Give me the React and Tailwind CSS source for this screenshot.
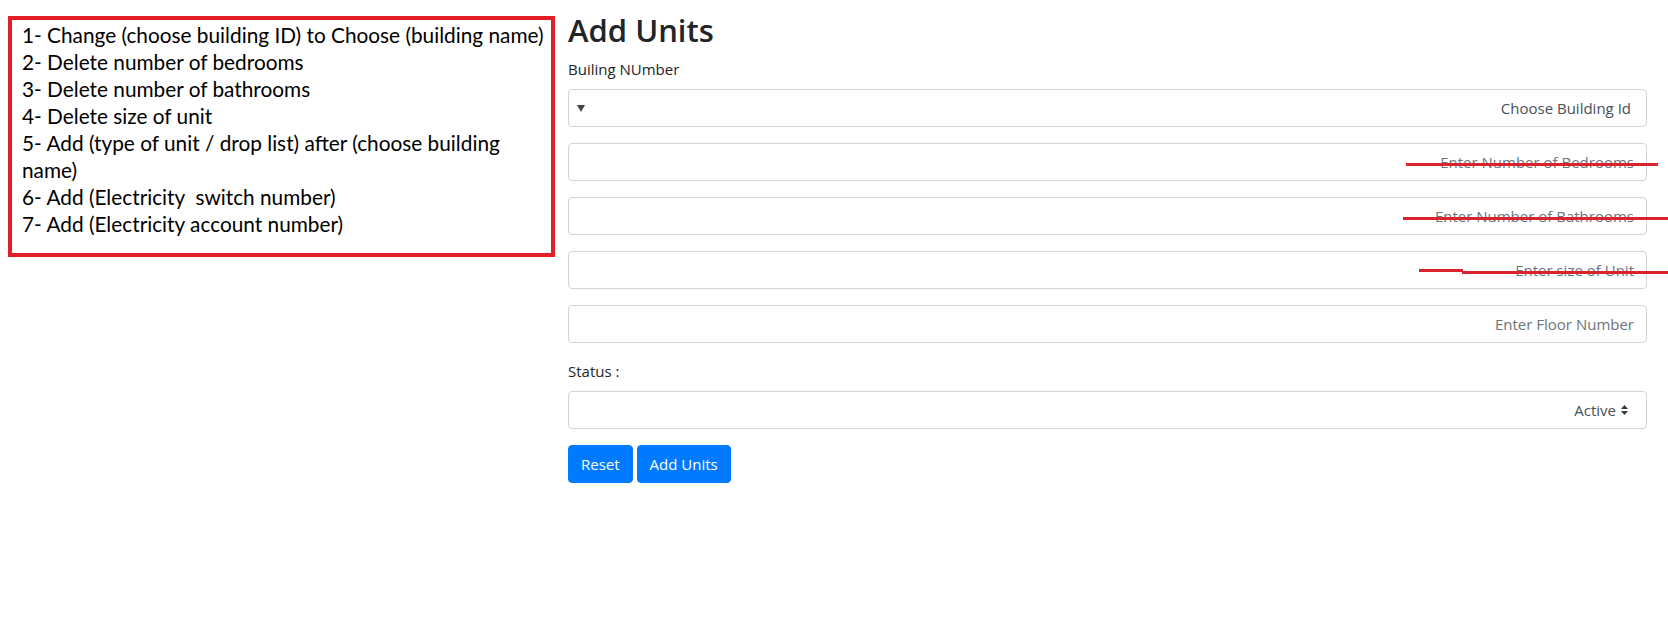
import React from 'react'

const notes = [
    '1- Change (choose building ID) to Choose (building name)',
    '2- Delete number of bedrooms',
    '3- Delete number of bathrooms',
    '4- Delete size of unit',
    '5- Add (type of unit / drop list) after (choose building',
    'name)',
    '6- Add (Electricity  switch number)',
    '7- Add (Electricity account number)',
]

const inputClass =
    'block h-[38px] w-full rounded-[4px] border border-[#ced4da] bg-white px-3 text-right text-[15px] text-[#495057] outline-none placeholder:text-[#6c757d]'

const App = () => {
    return (
        <main
            className="relative flex min-h-[627px] w-[1668px] bg-white text-[#212529]"
            style={{ fontFamily: '"Open Sans", "Noto Sans", sans-serif' }}
        >
            <div className="pl-[8px] pt-[16px]">
                <div
                    className="h-[241px] w-[547px] border-4 border-[#e21f26] pl-[10px] pt-[1px] text-[20.8px] leading-[27px] text-black"
                    style={{ fontFamily: 'Lato, "Liberation Sans", sans-serif' }}
                >
                    {notes.map((line, i) => (
                        <p key={i} className="whitespace-pre">
                            {line}
                        </p>
                    ))}
                </div>
            </div>

            <form className="ml-[13px] w-[1079px] pt-[11px]">
                <h2 className="mb-2 text-[31px] font-semibold leading-[38px]">Add Units</h2>

                <div className="mb-4">
                    <label className="mb-2 block text-[15px] leading-6">Builing NUmber</label>
                    <div className="flex h-[38px] w-full items-center justify-between rounded-[4px] border border-[#ced4da] bg-white pl-[8px] pr-[15px] text-[15px] text-[#495057]">
                        <svg width="8" height="7" viewBox="0 0 8 7" className="text-[#444]">
                            <path d="M0 0 H8 L4 7 Z" fill="currentColor" />
                        </svg>
                        <span>Choose Building Id</span>
                    </div>
                </div>

                <div className="mb-4">
                    <input className={inputClass} placeholder="Enter Number of Bedrooms" />
                </div>
                <div className="mb-4">
                    <input className={inputClass} placeholder="Enter Number of Bathrooms" />
                </div>
                <div className="mb-4">
                    <input className={inputClass} placeholder="Enter size of Unit" />
                </div>
                <div className="mb-4">
                    <input className={inputClass} placeholder="Enter Floor Number" />
                </div>

                <div className="mb-4">
                    <label className="mb-2 block text-[15px] leading-6">Status :</label>
                    <div className="flex h-[38px] w-full items-center justify-end gap-[5px] rounded-[4px] border border-[#ced4da] bg-white pr-[18px] text-[15px] text-[#495057]">
                        <span>Active</span>
                        <svg width="7" height="10" viewBox="0 0 7 10" className="text-[#343a40]">
                            <path d="M3.5 0 L7 4 H0 Z M0 6 H7 L3.5 10 Z" fill="currentColor" />
                        </svg>
                    </div>
                </div>

                <div className="flex gap-[4px]">
                    <button
                        type="button"
                        className="h-[38px] rounded-[4px] border border-[#007bff] bg-[#007bff] px-3 text-[15px] text-white"
                    >
                        Reset
                    </button>
                    <button
                        type="button"
                        className="h-[38px] rounded-[4px] border border-[#007bff] bg-[#007bff] px-3 text-[15px] text-white"
                    >
                        Add Units
                    </button>
                </div>
            </form>

            {/* red strike-through marks drawn over the placeholders */}
            <div className="absolute left-[1406px] top-[163px] h-[3px] w-[252px] bg-[#d9232d]" />
            <div className="absolute left-[1403px] top-[217px] h-[3px] w-[265px] bg-[#d9232d]" />
            <div className="absolute left-[1419px] top-[269px] h-[3px] w-[44px] bg-[#d9232d]" />
            <div className="absolute left-[1462px] top-[271px] h-[3px] w-[206px] bg-[#d9232d]" />
        </main>
    )
}

export default App
